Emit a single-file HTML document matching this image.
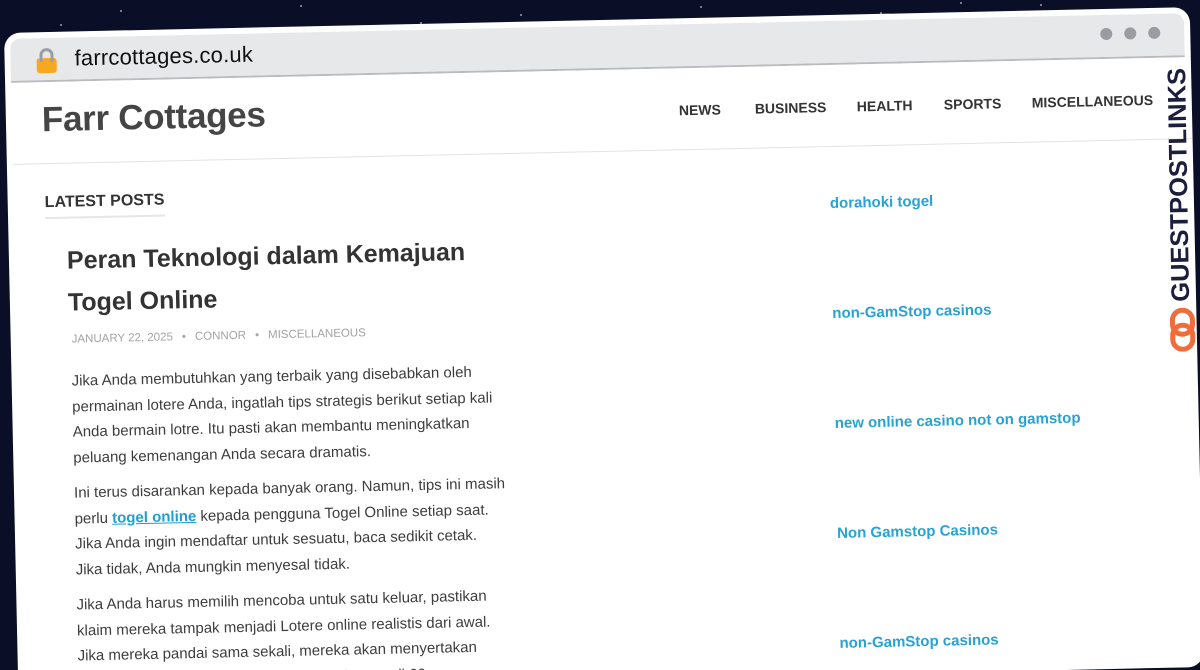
<!DOCTYPE html>
<html><head><meta charset="utf-8"><style>
*{margin:0;padding:0;box-sizing:border-box}
html,body{width:1200px;height:670px;overflow:hidden}
body{background:#0a0e26;font-family:"Liberation Sans",sans-serif;position:relative}
.star{position:absolute;width:2px;height:2px;background:#cfd6ff;border-radius:50%;opacity:.7}
#win{position:absolute;left:4px;top:33px;width:1186px;height:660px;background:#fff;border-radius:16px;transform-origin:0 0;transform:rotate(-1.25deg);overflow:hidden}
#bar{position:absolute;left:6px;top:6px;right:6px;height:44px;background:#e7e8ea;border-bottom:2px solid #b9bbbf;border-radius:10px 10px 0 0}
.lock{position:absolute;left:26px;top:20px;width:20px;height:15px;background:#f7a823;border-radius:3px}
.lock:before{content:"";position:absolute;left:3px;top:-10px;width:14px;height:14px;border:3px solid #9a9da3;border-bottom:none;border-radius:7px 7px 0 0;box-sizing:border-box}
.url{position:absolute;left:64px;top:8px;font-size:22px;color:#111;letter-spacing:.2px}
.dots{position:absolute;right:24px;top:12px}
.dots span{display:inline-block;width:12px;height:12px;border-radius:50%;background:#9b9ca1;margin-left:12px}
.title{position:absolute;left:36px;top:68px;font-size:35px;font-weight:bold;color:#454545;letter-spacing:-.3px}
.nav{position:absolute;top:84px;font-size:14px;font-weight:bold;color:#333}
.hr{position:absolute;left:6px;right:0;top:131px;border-top:1px solid #e3e3e3}
.lp{position:absolute;left:37px;top:162px;font-size:16px;font-weight:bold;color:#333;padding-bottom:5px;border-bottom:2px solid #e6e6e6}
.h1{position:absolute;left:58px;top:208px;font-size:25px;font-weight:bold;color:#333;line-height:42px}
.meta{position:absolute;left:61px;top:302px;font-size:11.5px;color:#a3a3a3}
.meta i{font-style:normal;margin:0 9px}
.p{position:absolute;left:60px;font-size:15px;color:#3d3d3d;line-height:25.5px}
.p a{color:#1d9fd0;font-weight:bold;text-decoration:underline}
.sl{position:absolute;left:822px;font-size:15px;font-weight:bold;color:#27a3d3}
#logo{position:absolute;left:1168px;top:352px;transform-origin:0 0;transform:rotate(-91deg);white-space:nowrap;font-size:25.5px;font-weight:900;color:#1b1f3b;display:flex;align-items:center}
#logo svg{margin-right:6px}
</style></head><body>
<div class="star" style="left:120px;top:10px"></div><div class="star" style="left:300px;top:5px"></div><div class="star" style="left:520px;top:14px"></div><div class="star" style="left:700px;top:6px"></div><div class="star" style="left:880px;top:12px"></div><div class="star" style="left:1040px;top:4px"></div><div class="star" style="left:60px;top:24px"></div><div class="star" style="left:420px;top:22px"></div><div class="star" style="left:960px;top:2px"></div>
<div id="win">
<div id="bar"><div class="lock"></div><div class="url">farrcottages.co.uk</div><div class="dots"><span></span><span></span><span></span></div></div>
<div class="title">Farr Cottages</div>
<div class="nav" style="left:673px">NEWS</div>
<div class="nav" style="left:749px">BUSINESS</div>
<div class="nav" style="left:851px">HEALTH</div>
<div class="nav" style="left:938px">SPORTS</div>
<div class="nav" style="left:1026px">MISCELLANEOUS</div>
<div class="hr"></div>
<div class="lp">LATEST POSTS</div>
<div class="h1">Peran Teknologi dalam Kemajuan<br>Togel Online</div>
<div class="meta">JANUARY 22, 2025<i>•</i>CONNOR<i>•</i>MISCELLANEOUS</div>
<div class="p" style="top:337px">Jika Anda membutuhkan yang terbaik yang disebabkan oleh<br>permainan lotere Anda, ingatlah tips strategis berikut setiap kali<br>Anda bermain lotre. Itu pasti akan membantu meningkatkan<br>peluang kemenangan Anda secara dramatis.</div>
<div class="p" style="top:449px">Ini terus disarankan kepada banyak orang. Namun, tips ini masih<br>perlu <a>togel online</a> kepada pengguna Togel Online setiap saat.<br>Jika Anda ingin mendaftar untuk sesuatu, baca sedikit cetak.<br>Jika tidak, Anda mungkin menyesal tidak.</div>
<div class="p" style="top:561px">Jika Anda harus memilih mencoba untuk satu keluar, pastikan<br>klaim mereka tampak menjadi Lotere online realistis dari awal.<br>Jika mereka pandai sama sekali, mereka akan menyertakan<br>jaminan pengembalian dana, biasanya dengan di 60 era</div>
<div class="sl" style="top:180px">dorahoki togel</div>
<div class="sl" style="top:290px">non-GamStop casinos</div>
<div class="sl" style="top:400px">new online casino not on gamstop</div>
<div class="sl" style="top:510px">Non Gamstop Casinos</div>
<div class="sl" style="top:620px">non-GamStop casinos</div>
</div>
<div id="logo"><svg width="44" height="26" viewBox="0 0 44 26"><rect x="2.5" y="3" width="24" height="20" rx="10" fill="none" stroke="#f26b3a" stroke-width="5"/><rect x="17.5" y="3" width="24" height="20" rx="10" fill="none" stroke="#f26b3a" stroke-width="5"/></svg>GUESTPOSTLINKS</div>
</body></html>
